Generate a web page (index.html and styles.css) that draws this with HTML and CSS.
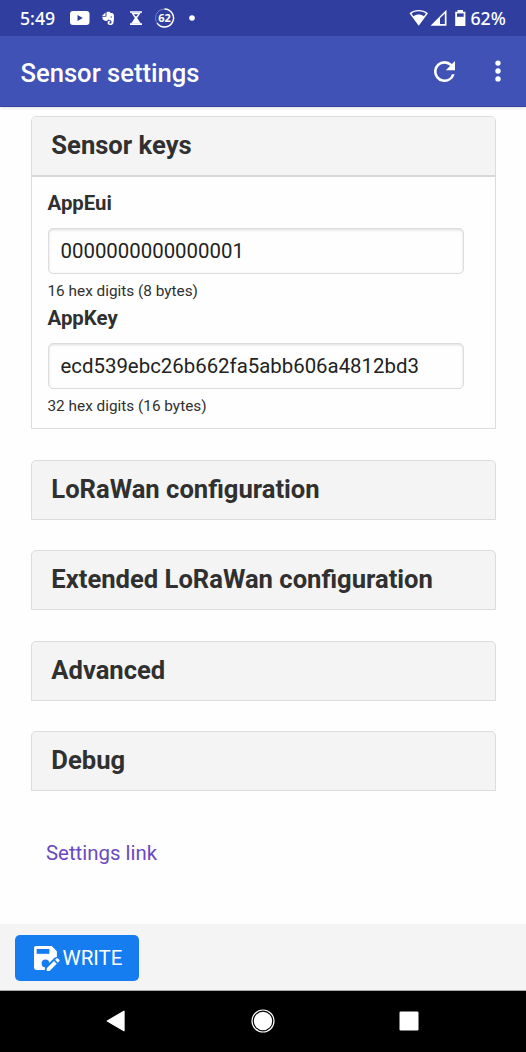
FILE: index.html
```html
<!DOCTYPE html>
<html lang="en">
<head>
<meta charset="utf-8">
<title>Sensor settings</title>
<link rel="stylesheet" href="styles.css">
</head>
<body>
<div class="screen">
  <div class="status">
    <span class="clock">5:49</span>
    <svg class="notifications" width="130" height="24" viewBox="70 6 130 24">
      <rect x="70" y="11" width="19.5" height="14" rx="3" fill="#fff"/>
      <path d="M77.500 15v6l5.300-3z" fill="#303f9f"/>
      <path d="M102 16l3.500-3.500v3.500z" fill="#fff"/>
      <path d="M106.500 12.200c2-.8 3.500-.3 4.200.7 2.200 0 3.100.6 3.200 2.500.2 2.700.1 5-.5 7.600-.4 1.500-1.500 2-3.100 2-1.800 0-2.700-.8-2.700-2.200 0-1.300.9-2.100 2.500-2v1.500c-.8 0-1 .3-1 .7 0 .5.500.6 1.200.6.900 0 1.200-.5 1.200-1.400 0-1.300-.5-1.900-1.900-2.200l-1.400-.4c-.3 1-1 1.500-2.200 1.300-2.600-.3-3.700-1.600-3.700-4.200h3.700c.4 0 .5-.2.5-.5z" fill="#fff"/>
      <circle cx="111.200" cy="17" r=".7" fill="#303f9f"/>
      <path d="M130 12h12M130 24.200h12" stroke="#fff" stroke-width="1.700"/>
      <path d="M131.200 12.800h9.600l-3.600 5.300 3.600 5.300h-9.600l3.600-5.300z" fill="#fff"/>
      <path d="M133.700 14.200h4.600l-2.300 2.500z" fill="#303f9f"/>
      <circle cx="164.500" cy="18" r="9" fill="none" stroke="#7580c8" stroke-width="1"/>
      <path d="M164.500 9a9 9 0 1 1-7.400 14.100" fill="none" stroke="#fff" stroke-width="1.400"/>
      <text x="164.500" y="21.900" class="ring-text">62</text>
      <circle cx="192" cy="18" r="2.800" fill="#fff"/>
    </svg>
    <svg class="signals" width="60" height="24" viewBox="408 6 60 24">
      <path d="M409.500 13.200c5.400-4.400 13-4.400 18.500 0L418.700 25.700z" fill="#fff"/>
      <path d="M411.500 13.600c4.400-3.100 10-3.100 14.400 0l-1.900 2.700c-3.300-2.300-7.300-2.300-10.600 0z" fill="#303f9f"/>
      <path d="M430.500 25.700h16V9.700z" fill="#fff"/>
      <path d="M440 18.300l4.800-4.800v10.600H440z" fill="#303f9f"/>
      <path d="M457.500 10h5.500v1.700h2.400v14.200h-10.200V11.700h2.300z" fill="#fff"/>
      <path d="M457 13.400h6.700v3.400H457z" fill="#303f9f"/>
    </svg>
    <span class="battery">62%</span>
  </div>
  <header class="appbar">
    <h1>Sensor settings</h1>
    <svg width="21" height="21" viewBox="4 4 16 16"><path fill="#fff" d="M17.650 6.350A7.958 7.958 0 0 0 12 4a8 8 0 1 0 7.730 10h-2.080A5.990 5.990 0 0 1 12 18c-3.310 0-6-2.690-6-6s2.690-6 6-6c1.660 0 3.140.69 4.220 1.780L13 11h7V4z"/></svg>
    <svg class="more" width="6" height="22" viewBox="0 0 6 22" fill="#fff"><circle cx="3" cy="3.100" r="2.700"/><circle cx="3" cy="11" r="2.700"/><circle cx="3" cy="18.900" r="2.700"/></svg>
  </header>
  <main class="content">
    <section class="card open">
      <h2>Sensor keys</h2>
      <div class="fields">
        <label for="eui">AppEui</label>
        <input id="eui" type="text" value="0000000000000001">
        <p>16 hex digits (8 bytes)</p>
        <label for="key">AppKey</label>
        <input id="key" type="text" value="ecd539ebc26b662fa5abb606a4812bd3">
        <p>32 hex digits (16 bytes)</p>
      </div>
    </section>
    <section class="card"><h2>LoRaWan configuration</h2></section>
    <section class="card"><h2>Extended LoRaWan configuration</h2></section>
    <section class="card"><h2>Advanced</h2></section>
    <section class="card"><h2>Debug</h2></section>
    <a class="link">Settings link</a>
  </main>
  <footer class="toolbar">
    <button class="write">
      <svg width="27" height="27" viewBox="0 0 26 26">
        <path fill="#fff" d="M3 1h15l5 5v13l-4 5H3a2 2 0 0 1-2-2V3a2 2 0 0 1 2-2z"/>
        <path fill="#167df0" d="M3.500 3.800h12.300v4.700H3.500z"/>
        <circle cx="12" cy="17.700" r="3.700" fill="#167df0"/>
        <path fill="#167df0" d="M11.400 26v-4.500l9.300-9.300q2.500-1.200 5.300 0V26z"/>
        <path fill="#fff" d="M13.200 22.300l7-7 2.700 2.700-7 7h-2.700zM21.200 14.300l1.400-1.400q.7-.6 1.400 0l1.300 1.300q.6.700 0 1.400L23.900 17z"/>
      </svg>
      <span>WRITE</span>
    </button>
  </footer>
  <nav class="navbar">
    <svg width="20" height="22" viewBox="0 0 20 22"><path d="M18 1.300v19.400L1.300 11z" fill="#fff" stroke="#fff" stroke-width="1.300" stroke-linejoin="round"/></svg>
    <svg width="24" height="24" viewBox="0 0 24 24"><circle cx="12" cy="12" r="11" fill="none" stroke="#fff" stroke-width="1.200"/><circle cx="12" cy="12" r="9.200" fill="#fff"/></svg>
    <svg width="20" height="20" viewBox="0 0 20 20"><rect x=".5" y=".5" width="19" height="19" rx="1.300" fill="#fff"/></svg>
  </nav>
</div>
</body>
</html>
```
FILE: styles.css
```css
* { box-sizing: border-box; }
body { margin: 0; background: #fefefe; font-family: Roboto, sans-serif; color: #303030; }
svg { display: block; flex: none; }
h1, h2, p { margin: 0; }
.screen { width: 526px; height: 1052px; display: flex; flex-direction: column; overflow: hidden; }

.status { height: 36px; flex: none; background: #303f9f; color: #fff; display: flex; align-items: center; padding-left: 20px; font: 500 17.700px "Noto Sans", sans-serif; }
.clock { width: 50px; }
.signals { margin-left: 208px; }
.battery { margin-left: 2.500px; }
.ring-text { font: 700 11px "Noto Sans", sans-serif; fill: #fff; text-anchor: middle; }

.appbar { height: 71px; flex: none; background: #4052b5; color: #fff; display: flex; align-items: center; padding: 0 25px 0 20.500px; border-bottom: 1px solid #3544a0; box-shadow: 0 1px 3px #0002; }
.appbar h1 { flex: 1; font-size: 25.600px; font-weight: 500; line-height: 30px; padding-top: 3px; }
.more { margin-left: 40px; }

.content { flex: 1; padding: 9px 30px 0 31px; display: flex; flex-direction: column; align-items: stretch; }
.card { height: 60px; margin-bottom: 30.600px; border: 1px solid #dcdcdc; border-radius: 5px 5px 0 0; background: #f4f4f4; flex: none; }
.card h2 { font-size: 25.600px; font-weight: 700; line-height: 57px; padding-left: 19.300px; }
.open { height: 313px; background: #fefefe; }
.open h2 { height: 60px; background: #f4f4f4; border-bottom: 2px solid #d8d8d8; border-radius: 4px 4px 0 0; }
.fields { padding: 12px 31px 0 15.500px; }
.fields label { display: block; font-size: 20.400px; font-weight: 700; line-height: 28px; }
.fields input { display: block; width: 100%; height: 46px; margin-top: 11px; padding: 0 12px; border: 1px solid #dcdcdc; border-radius: 5px; background: #fefefe; box-shadow: inset 0 1px 3px #0002; font: 400 20.400px Roboto, sans-serif; color: #222; }
.fields p { font-size: 15.350px; line-height: 20px; margin: 7px 0 3px; }
.link { margin: 0 0 0 15px; font-size: 20.400px; line-height: 28px; padding-top: 17px; color: #6b49c0; }

.toolbar { height: 67px; flex: none; background: #f4f4f4; border-bottom: 1px solid #a8adab; padding: 11px 15px; }
.write { width: 124px; height: 46px; border: 0; border-radius: 5px; background: #167df0; color: #fff; display: flex; align-items: center; padding: 0 0 0 18px; font: 400 20.500px Roboto, sans-serif; }
.write span { margin-left: 2.500px; }
.navbar { height: 61px; flex: none; background: #000; display: grid; grid-template-columns: 20px 24px 20px; column-gap: 125px 0; align-items: center; column-gap: 124.500px; padding: 0 0 1px 106px; }
```
